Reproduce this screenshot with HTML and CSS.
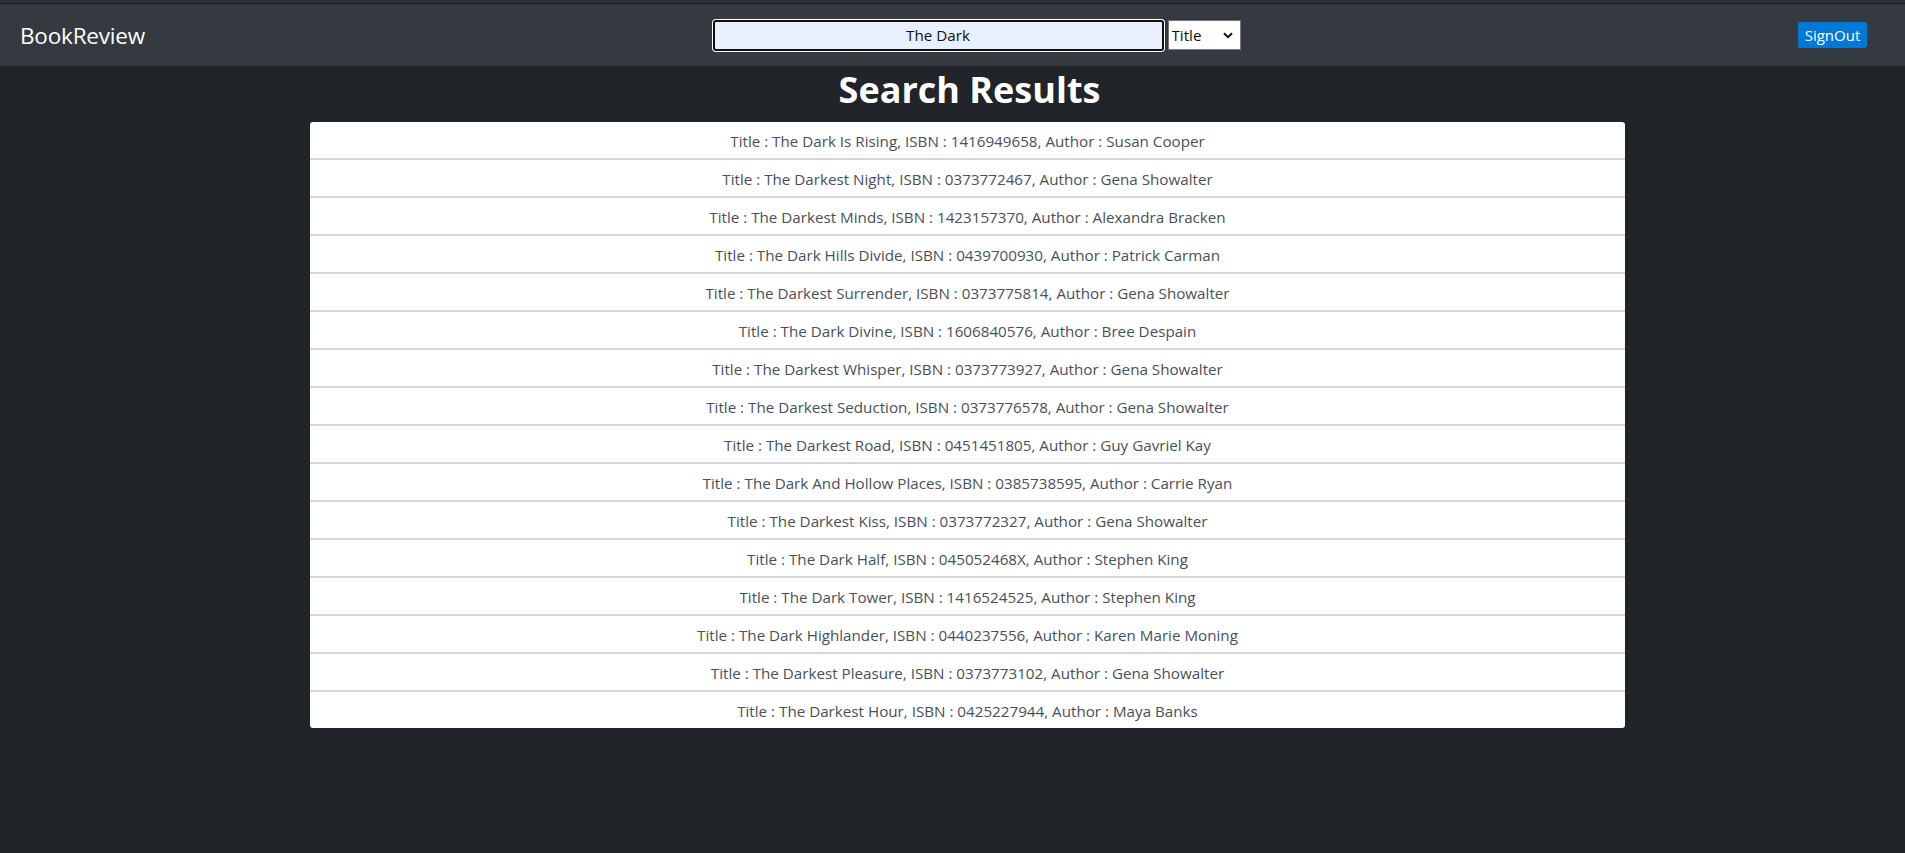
FILE: index.html
```html
<!DOCTYPE html>
<html lang="en">
<head>
<meta charset="utf-8">
<title>BookReview</title>
<link rel="stylesheet" href="styles.css">
</head>
<body>
<div class="topline"></div>
<nav class="navbar">
  <div class="brand">BookReview</div>
  <form class="search">
    <input class="search-input" type="text" value="The Dark">
    <div class="select-wrap">
      <select class="search-select">
        <option>Title</option>
        <option>ISBN</option>
        <option>Author</option>
      </select>
      <svg class="chev" width="10" height="7" viewBox="0 0 10 7"><path d="M1 1.2 L5 5.2 L9 1.2" fill="none" stroke="#111" stroke-width="2"/></svg>
    </div>
  </form>
  <div class="right"><button class="signout" type="button">SignOut</button></div>
</nav>
<main class="content">
  <h1 class="heading">Search Results</h1>
  <ul class="results">
    <li>Title : The Dark Is Rising, ISBN : 1416949658, Author : Susan Cooper</li>
    <li>Title : The Darkest Night, ISBN : 0373772467, Author : Gena Showalter</li>
    <li>Title : The Darkest Minds, ISBN : 1423157370, Author : Alexandra Bracken</li>
    <li>Title : The Dark Hills Divide, ISBN : 0439700930, Author : Patrick Carman</li>
    <li>Title : The Darkest Surrender, ISBN : 0373775814, Author : Gena Showalter</li>
    <li>Title : The Dark Divine, ISBN : 1606840576, Author : Bree Despain</li>
    <li>Title : The Darkest Whisper, ISBN : 0373773927, Author : Gena Showalter</li>
    <li>Title : The Darkest Seduction, ISBN : 0373776578, Author : Gena Showalter</li>
    <li>Title : The Darkest Road, ISBN : 0451451805, Author : Guy Gavriel Kay</li>
    <li>Title : The Dark And Hollow Places, ISBN : 0385738595, Author : Carrie Ryan</li>
    <li>Title : The Darkest Kiss, ISBN : 0373772327, Author : Gena Showalter</li>
    <li>Title : The Dark Half, ISBN : 045052468X, Author : Stephen King</li>
    <li>Title : The Dark Tower, ISBN : 1416524525, Author : Stephen King</li>
    <li>Title : The Dark Highlander, ISBN : 0440237556, Author : Karen Marie Moning</li>
    <li>Title : The Darkest Pleasure, ISBN : 0373773102, Author : Gena Showalter</li>
    <li>Title : The Darkest Hour, ISBN : 0425227944, Author : Maya Banks</li>
  </ul>
</main>
</body>
</html>
```
FILE: styles.css
```css
* { box-sizing: border-box; }
html, body { margin: 0; padding: 0; }
body {
  background: #212529;
  font-family: "Open Sans", "Noto Sans", sans-serif;
  min-height: 853px;
}
.topline {
  height: 4px;
  background: #2c2f33;
  border-bottom: 1px solid #1f2225;
}
.navbar {
  height: 62px;
  background: #343a40;
  display: grid;
  grid-template-columns: 1fr auto 1fr;
  align-items: center;
  padding: 0 38px 0 20px;
}
.brand {
  color: #fff;
  font-size: 22.5px;
  letter-spacing: -0.2px;
}
.search {
  display: flex;
  align-items: center;
  gap: 4px;
  margin: 0 0 0 66px;
}
.search-input {
  width: 451px;
  height: 31px;
  background: #e8f0fe;
  border: 2px solid #111;
  border-radius: 3px;
  box-shadow: 0 0 0 1px #fff;
  text-align: center;
  font-family: "Open Sans", sans-serif;
  font-size: 15.2px;
  color: #111;
  padding: 0 4px;
  outline: none;
}
.select-wrap { position: relative; }
.search-select {
  appearance: none;
  -webkit-appearance: none;
  width: 73px;
  height: 30px;
  background: #fff;
  border: 1px solid #767676;
  border-radius: 0;
  font-family: "Open Sans", sans-serif;
  font-size: 15.2px;
  color: #111;
  padding: 0 0 0 3px;
  display: block;
}
.chev {
  position: absolute;
  right: 8px;
  top: 12px;
  pointer-events: none;
}
.right {
  display: flex;
  justify-content: flex-end;
}
.signout {
  background: #0078d7;
  color: #fff;
  border: none;
  border-radius: 2px;
  height: 26px;
  width: 69px;
  padding: 0;
  font-family: "Open Sans", sans-serif;
  font-size: 15px;
}
.content {
  padding: 0 280px 0 310px;
}
.heading {
  margin: 0;
  height: 56px;
  line-height: 47px;
  color: #fff;
  text-align: center;
  font-size: 36px;
  font-weight: 700;
  padding-left: 4px;
}
.results {
  list-style: none;
  margin: 0;
  padding: 0;
  background: #fff;
  border-radius: 3px;
  overflow: hidden;
}
.results li {
  height: 38px;
  line-height: 36px;
  padding-top: 1px;
  text-align: center;
  color: #495057;
  font-size: 15.2px;
  border-bottom: 2px solid #d2d4d6;
}
.results li:last-child {
  border-bottom: none;
  height: 36px;
}
```
